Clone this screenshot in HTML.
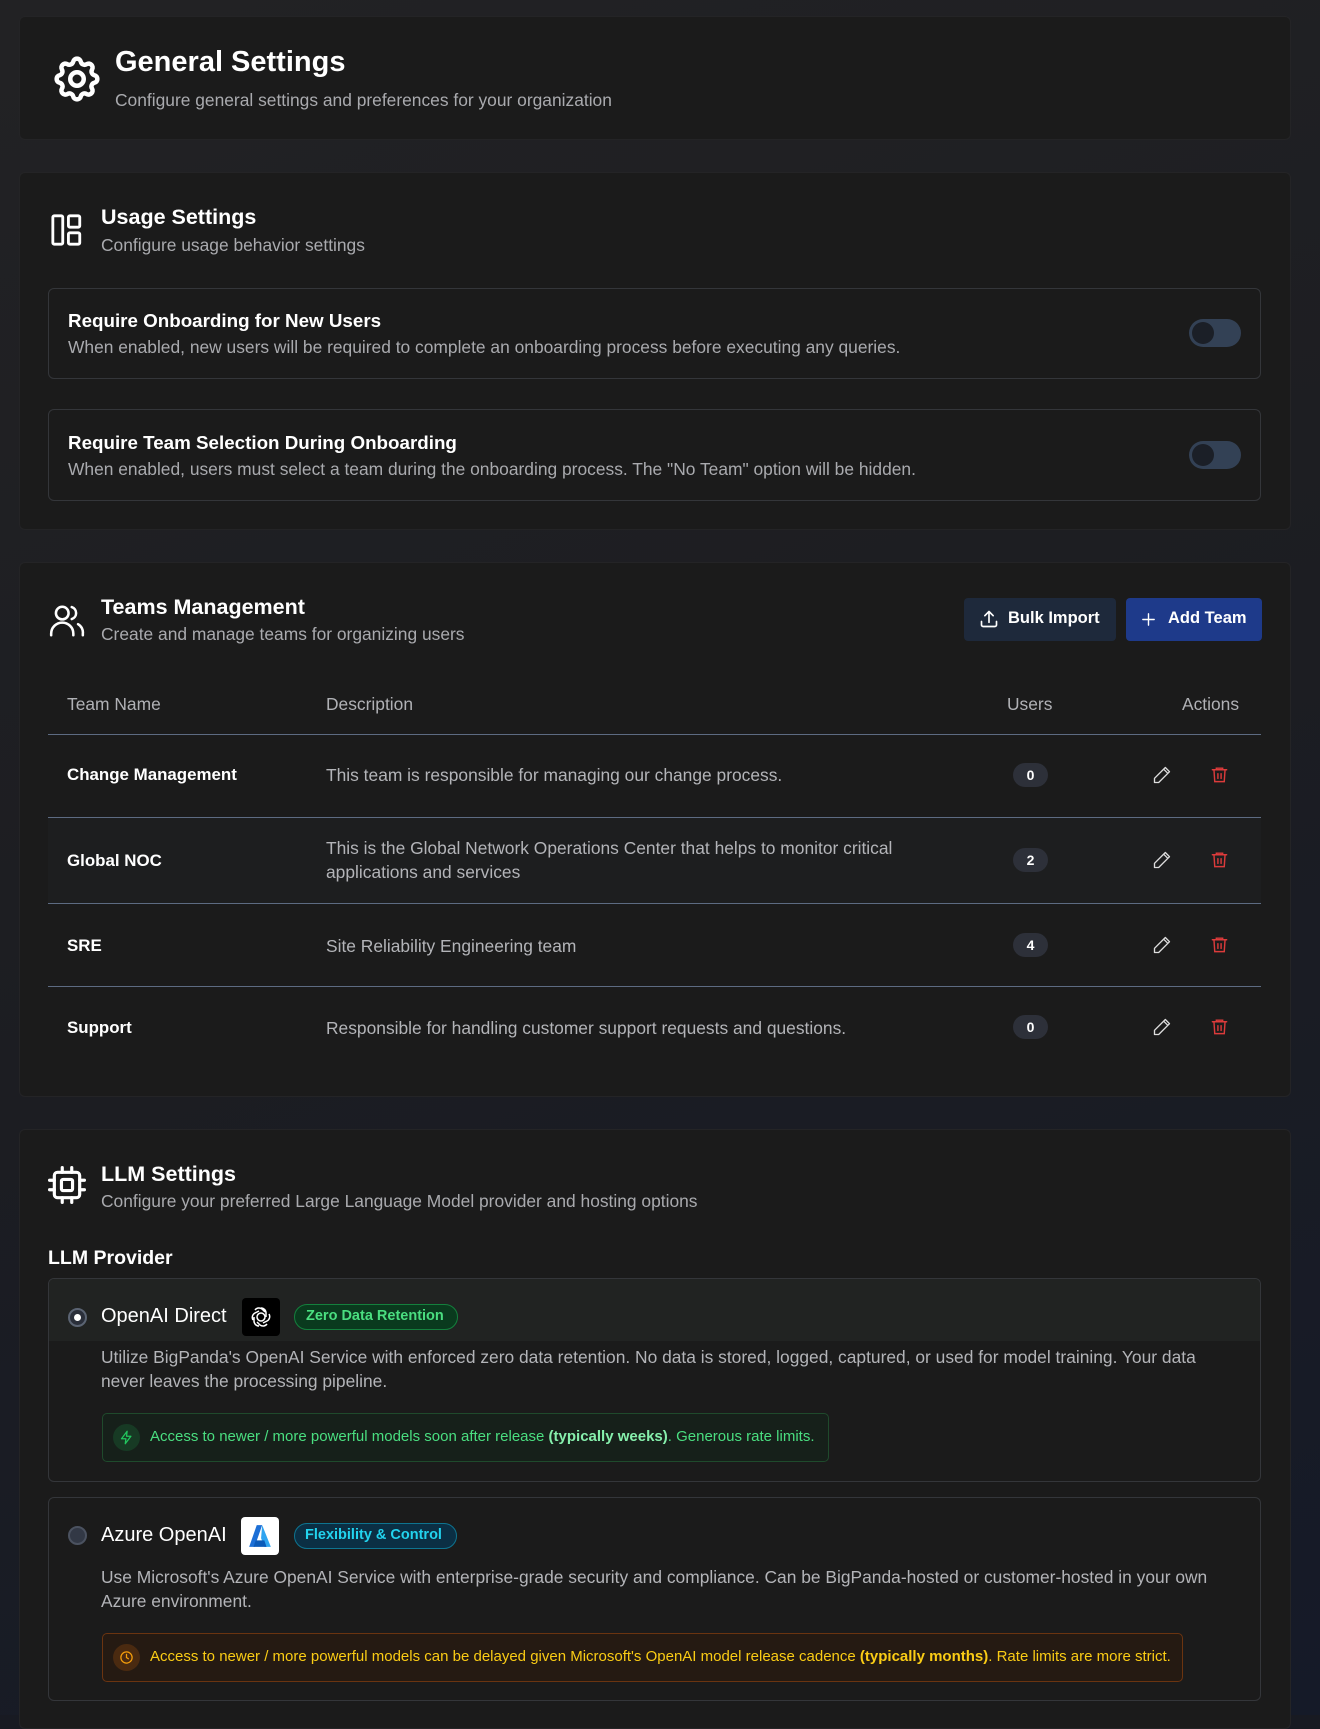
<!DOCTYPE html>
<html style="background:#181a22"><head><meta charset="utf-8"><style>
*{box-sizing:border-box;margin:0;padding:0}
body{width:1320px;height:1715px;overflow:hidden;background:linear-gradient(160deg,#222224 0%,#1c1d22 50%,#151a28 100%);font-family:"Liberation Sans",sans-serif;color:#fff;position:relative}
.a{position:absolute}
.card{position:absolute;left:19px;width:1272px;background:#1b1b1b;border-radius:6px;border:1px solid #242426}
.t{position:absolute;white-space:nowrap}
.h1{font-size:29px;font-weight:bold}
.h2{font-size:21.5px;font-weight:bold}
.sub{font-size:17.4px;color:#a9aaae}
.box{position:absolute;left:48px;width:1213px;border:1px solid #34363a;border-radius:6px}
.rt{font-size:18.8px;font-weight:bold}
.tog{position:absolute;left:1189px;width:52px;height:28px;border-radius:14px;background:#334155}
.tog::after{content:"";position:absolute;left:3px;top:3px;width:22px;height:22px;border-radius:50%;background:#1b1f27}
.line{position:absolute;left:48px;width:1213px;height:1px;background:#5d6b82}
.th{font-size:17.4px;color:#b0b1b5}
.tn{font-size:16.9px;font-weight:bold}
.td{font-size:17.4px;color:#b3b4b8;line-height:24px}
.pill{position:absolute;left:1013px;width:35px;height:24px;border-radius:12px;background:#2d3039;font-size:14px;font-weight:bold;text-align:center;line-height:24px}
</style></head><body>

<div class="card" style="top:16px;height:124px"></div>
<svg class="a" style="left:50px;top:52px" width="54" height="54" viewBox="0 0 24 24" fill="none" stroke="#fff" stroke-width="2" stroke-linecap="round" stroke-linejoin="round"><path d="M10.3 4.3c.4-1.8 3-1.8 3.4 0a1.7 1.7 0 0 0 2.6 1.1c1.5-.9 3.3.8 2.4 2.4a1.7 1.7 0 0 0 1 2.5c1.8.4 1.8 3 0 3.4a1.7 1.7 0 0 0-1 2.6c.9 1.5-.9 3.300-2.4 2.4a1.7 1.7 0 0 0-2.6 1c-.4 1.8-3 1.8-3.4 0a1.7 1.7 0 0 0-2.6-1c-1.5.9-3.3-.9-2.4-2.4a1.7 1.7 0 0 0-1-2.6c-1.8-.4-1.8-3 0-3.4a1.7 1.7 0 0 0 1-2.5c-.9-1.6.9-3.3 2.4-2.4 1 .6 2.3.1 2.6-1.1z"/><circle cx="12" cy="12" r="3"/></svg>
<div class="t h1" style="left:115px;top:46px">General Settings</div>
<div class="t sub" style="left:115px;top:90px">Configure general settings and preferences for your organization</div>

<div class="card" style="top:172px;height:358px"></div>
<svg class="a" style="left:50px;top:213px" width="34" height="34" viewBox="0 0 24 24" fill="none" stroke="#fff" stroke-width="2" stroke-linejoin="round"><rect x="2" y="2" width="7" height="20" rx="1"/><rect x="13" y="2" width="8" height="8" rx="1"/><rect x="13" y="14" width="8" height="8" rx="1"/></svg>
<div class="t h2" style="left:101px;top:205px">Usage Settings</div>
<div class="t sub" style="left:101px;top:235px">Configure usage behavior settings</div>

<div class="box" style="top:288px;height:91px"></div>
<div class="t rt" style="left:68px;top:310px">Require Onboarding for New Users</div>
<div class="t sub" style="left:68px;top:337px">When enabled, new users will be required to complete an onboarding process before executing any queries.</div>
<div class="tog" style="top:319px"></div>

<div class="box" style="top:409px;height:92px"></div>
<div class="t rt" style="left:68px;top:432px">Require Team Selection During Onboarding</div>
<div class="t sub" style="left:68px;top:459px">When enabled, users must select a team during the onboarding process. The "No Team" option will be hidden.</div>
<div class="tog" style="top:441px"></div>

<div class="card" style="top:562px;height:535px"></div>
<svg class="a" style="left:48px;top:602px" width="38" height="38" viewBox="0 0 24 24" fill="none" stroke="#fff" stroke-width="1.6" stroke-linecap="round"><circle cx="9" cy="7" r="4"/><path d="M2 21v-1a7 7 0 0 1 14 0v1"/><path d="M15 3.2a4 4 0 0 1 0 7.6M19 14a6 6 0 0 1 3 6v1"/></svg>
<div class="t h2" style="left:101px;top:595px">Teams Management</div>
<div class="t sub" style="left:101px;top:624px">Create and manage teams for organizing users</div>
<div class="a" style="left:964px;top:598px;width:152px;height:43px;background:#1e293b;border-radius:4px"></div>
<svg class="a" style="left:979px;top:609px" width="20" height="20" viewBox="0 0 24 24" fill="none" stroke="#fff" stroke-width="2" stroke-linecap="round" stroke-linejoin="round"><path d="M3 15v4a2 2 0 0 0 2 2h14a2 2 0 0 0 2-2v-4M12 3v13M7 8l5-5 5 5"/></svg>
<div class="t" style="left:1008px;top:609px;font-size:16.5px;font-weight:bold">Bulk Import</div>
<div class="a" style="left:1126px;top:598px;width:136px;height:43px;background:#1e3a8a;border-radius:4px"></div>
<svg class="a" style="left:1140px;top:611px" width="17" height="17" viewBox="0 0 24 24" fill="none" stroke="#fff" stroke-width="2" stroke-linecap="round"><path d="M12 4v16M4 12h16"/></svg>
<div class="t" style="left:1168px;top:609px;font-size:16.5px;font-weight:bold">Add Team</div>

<div class="t th" style="left:67px;top:694px">Team Name</div>
<div class="t th" style="left:326px;top:694px">Description</div>
<div class="t th" style="left:1007px;top:694px">Users</div>
<div class="t th" style="left:1182px;top:694px">Actions</div>
<div class="line" style="top:734px"></div>
<div class="a" style="left:48px;top:818px;width:1213px;height:85px;background:#1d1e1f"></div>
<div class="line" style="top:817px"></div>
<div class="line" style="top:903px"></div>
<div class="line" style="top:986px"></div>

<div class="t tn" style="left:67px;top:765px">Change Management</div>
<div class="t td" style="left:326px;top:763px">This team is responsible for managing our change process.</div>
<div class="pill" style="top:763px">0</div>
<div class="t tn" style="left:67px;top:851px">Global NOC</div>
<div class="t td" style="left:326px;top:836px">This is the Global Network Operations Center that helps to monitor critical<br>applications and services</div>
<div class="pill" style="top:848px">2</div>
<div class="t tn" style="left:67px;top:936px">SRE</div>
<div class="t td" style="left:326px;top:934px">Site Reliability Engineering team</div>
<div class="pill" style="top:933px">4</div>
<div class="t tn" style="left:67px;top:1018px">Support</div>
<div class="t td" style="left:326px;top:1016px">Responsible for handling customer support requests and questions.</div>
<div class="pill" style="top:1015px">0</div>

<svg width="0" height="0" style="position:absolute"><defs>
<g id="ed" fill="none" stroke="#ddd" stroke-width="1.6" stroke-linejoin="round"><path d="M16 3l5 5L8 21H3v-5z"/><path d="M14 5l5 5"/></g>
<g id="tr" fill="none" stroke="#dc3b3b" stroke-width="1.8" stroke-linecap="round"><path d="M3 6h18M8 6V4h8v2M5 6l1 15h12l1-15M10 11v6M14 11v6"/></g>
</defs></svg>
<svg class="a" style="left:1152px;top:765px" width="20" height="20" viewBox="0 0 24 24"><use href="#ed"/></svg>
<svg class="a" style="left:1210px;top:765px" width="19" height="19" viewBox="0 0 24 24"><use href="#tr"/></svg>
<svg class="a" style="left:1152px;top:850px" width="20" height="20" viewBox="0 0 24 24"><use href="#ed"/></svg>
<svg class="a" style="left:1210px;top:850px" width="19" height="19" viewBox="0 0 24 24"><use href="#tr"/></svg>
<svg class="a" style="left:1152px;top:935px" width="20" height="20" viewBox="0 0 24 24"><use href="#ed"/></svg>
<svg class="a" style="left:1210px;top:935px" width="19" height="19" viewBox="0 0 24 24"><use href="#tr"/></svg>
<svg class="a" style="left:1152px;top:1017px" width="20" height="20" viewBox="0 0 24 24"><use href="#ed"/></svg>
<svg class="a" style="left:1210px;top:1017px" width="19" height="19" viewBox="0 0 24 24"><use href="#tr"/></svg>

<div class="card" style="top:1129px;height:600px"></div>
<svg class="a" style="left:48px;top:1166px" width="38" height="38" viewBox="0 0 24 24" fill="none" stroke="#fff" stroke-width="2" stroke-linecap="round"><rect x="4" y="4" width="16" height="16" rx="2"/><rect x="8.5" y="8.5" width="7" height="7" rx="1"/><path d="M9 1v3M15 1v3M9 20v3M15 20v3M1 9h3M1 15h3M20 9h3M20 15h3"/></svg>
<div class="t h2" style="left:101px;top:1162px">LLM Settings</div>
<div class="t sub" style="left:101px;top:1191px">Configure your preferred Large Language Model provider and hosting options</div>
<div class="t" style="left:48px;top:1247px;font-size:19.5px;font-weight:bold">LLM Provider</div>

<div class="box" style="top:1278px;height:204px;overflow:hidden"><div style="height:62px;background:#212322"></div></div>
<div class="a" style="left:68px;top:1308px;width:19px;height:19px;border-radius:50%;border:2px solid #5b6473;background:#2a2f3a"></div>
<div class="a" style="left:74px;top:1314px;width:7px;height:7px;border-radius:50%;background:#fff"></div>
<div class="t" style="left:101px;top:1305px;font-size:20px">OpenAI Direct</div>
<div class="a" style="left:242px;top:1298px;width:38px;height:38px;background:#000;border-radius:4px"></div>
<svg class="a" style="left:249px;top:1305px" width="24" height="24" viewBox="0 0 24 24" fill="none" stroke="#fff" stroke-width="1.5"><circle cx="12" cy="12" r="4"/><path d="M12 3a5 5 0 0 1 5 5v4M20 9a5 5 0 0 1-2 7l-4 2M18 19a5 5 0 0 1-7 1l-3-3M10 21a5 5 0 0 1-5-5v-4M4 15a5 5 0 0 1 2-7l4-2M6 5a5 5 0 0 1 7-1l3 3"/></svg>
<div class="a" style="left:294px;top:1304px;width:164px;height:26px;border-radius:13px;background:#0a3a1e;border:1px solid #14803d"></div>
<div class="t" style="left:306px;top:1308px;font-size:14.5px;font-weight:bold;color:#4ade80">Zero Data Retention</div>
<div class="t" style="left:101px;top:1345px;font-size:17.4px;color:#b3b4b8;line-height:24px">Utilize BigPanda's OpenAI Service with enforced zero data retention. No data is stored, logged, captured, or used for model training. Your data<br>never leaves the processing pipeline.</div>
<div class="a" style="left:102px;top:1413px;width:727px;height:49px;border-radius:5px;background:#16201a;border:1px solid #1f4a2c"></div>
<div class="a" style="left:113px;top:1424px;width:27px;height:27px;border-radius:50%;background:#173a24"></div>
<svg class="a" style="left:119px;top:1430px" width="15" height="15" viewBox="0 0 24 24" fill="none" stroke="#22c55e" stroke-width="2" stroke-linejoin="round"><path d="M13 2L4 14h7l-1 8 9-12h-7z"/></svg>
<div class="t" style="left:150px;top:1428px;font-size:15px;color:#4ade80">Access to newer / more powerful models soon after release <b style="color:#86efac">(typically weeks)</b>. Generous rate limits.</div>

<div class="box" style="top:1497px;height:204px"></div>
<div class="a" style="left:68px;top:1526px;width:19px;height:19px;border-radius:50%;border:2px solid #4b5260;background:#323845"></div>
<div class="t" style="left:101px;top:1524px;font-size:20px">Azure OpenAI</div>
<div class="a" style="left:241px;top:1517px;width:38px;height:38px;background:#fff;border-radius:4px"></div>
<svg class="a" style="left:247px;top:1523px" width="26" height="26" viewBox="0 0 24 24"><path d="M9 2h5L7 22H2z" fill="#1c6fd6"/><path d="M14 2l8 20h-6l-3-8z" fill="#2fa4f0"/><path d="M8 16h8l2 6H6z" fill="#0b5ab8"/></svg>
<div class="a" style="left:294px;top:1523px;width:163px;height:26px;border-radius:13px;background:#0b2f44;border:1px solid #0e7490"></div>
<div class="t" style="left:305px;top:1527px;font-size:14.5px;font-weight:bold;color:#22d3ee">Flexibility &amp; Control</div>
<div class="t" style="left:101px;top:1565px;font-size:17.4px;color:#b3b4b8;line-height:24px">Use Microsoft's Azure OpenAI Service with enterprise-grade security and compliance. Can be BigPanda-hosted or customer-hosted in your own<br>Azure environment.</div>
<div class="a" style="left:102px;top:1633px;width:1081px;height:49px;border-radius:5px;background:#251a12;border:1px solid #6b3410"></div>
<div class="a" style="left:113px;top:1644px;width:27px;height:27px;border-radius:50%;background:#4a2a10"></div>
<svg class="a" style="left:119px;top:1650px" width="15" height="15" viewBox="0 0 24 24" fill="none" stroke="#f59e0b" stroke-width="2" stroke-linecap="round"><circle cx="12" cy="12" r="9"/><path d="M12 7v5l3 2"/></svg>
<div class="t" style="left:150px;top:1648px;font-size:15px;color:#facc15">Access to newer / more powerful models can be delayed given Microsoft's OpenAI model release cadence <b>(typically months)</b>. Rate limits are more strict.</div>
</body></html>
